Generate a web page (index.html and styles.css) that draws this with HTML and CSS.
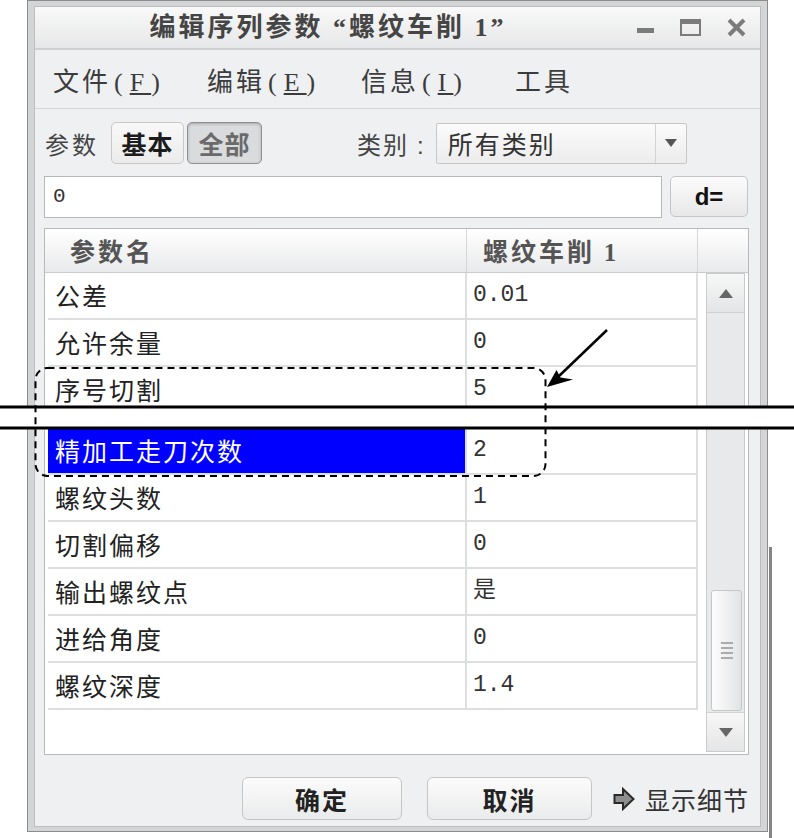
FILE: index.html
```html
<!DOCTYPE html>
<html lang="zh-CN">
<head>
    <meta charset="UTF-8">
    <title>编辑序列参数</title>
    <link rel="stylesheet" href="styles.css">
</head>
<body>
    <div class="window">
        <div class="frame">
            <div class="titlebar">
                <div class="title">编辑序列参数 “螺纹车削 1”</div>
                <div class="controls">
                    <svg class="ctl-min" width="17" height="5" viewBox="0 0 17 5"><rect width="17" height="5" fill="#7b7b7b"/></svg>
                    <svg width="21" height="17" viewBox="0 0 21 17"><rect x="1" y="1" width="19" height="15" fill="none" stroke="#7b7b7b" stroke-width="2"/><rect x="0" y="0" width="21" height="5" fill="#7b7b7b"/></svg>
                    <svg width="19" height="19" viewBox="0 0 19 19"><path d="M2 2 L17 17 M17 2 L2 17" stroke="#7b7b7b" stroke-width="4"/></svg>
                </div>
            </div>

            <div class="menubar">
                <span class="menu-item">文件<span class="key">(<u>F</u>)</span></span>
                <span class="menu-item">编辑<span class="key">(<u>E</u>)</span></span>
                <span class="menu-item">信息<span class="key">(<u>I</u>)</span></span>
                <span class="menu-item">工具</span>
            </div>

            <div class="toolbar">
                <span class="label">参数</span>
                <span class="seg">基本</span>
                <span class="seg pressed">全部</span>
                <span class="label cat">类别<span class="colon">:</span></span>
                <div class="select">
                    <span class="select-text">所有类别</span>
                    <span class="select-arrow">
                        <svg width="12" height="8" viewBox="0 0 12 8"><polygon points="0,0 12,0 6,8" fill="#555"/></svg>
                    </span>
                </div>
            </div>

            <div class="input-row">
                <div class="input">0</div>
                <div class="btn-d">d=</div>
            </div>

            <div class="table">
                <div class="thead">
                    <div class="th th-name">参数名</div>
                    <div class="th th-val">螺纹车削 <span class="num">1</span></div>
                    <div class="th th-rest"></div>
                </div>
                <div class="tbody">
                    <div class="rows">
                        <div class="row"><div class="cell name">公差</div><div class="cell val">0.01</div></div>
                        <div class="row"><div class="cell name">允许余量</div><div class="cell val">0</div></div>
                        <div class="row cut"><div class="cell name">序号切割</div><div class="cell val">5</div></div>
                        <div class="row sel"><div class="cell name">精加工走刀次数</div><div class="cell val">2</div></div>
                        <div class="row"><div class="cell name">螺纹头数</div><div class="cell val">1</div></div>
                        <div class="row"><div class="cell name">切割偏移</div><div class="cell val">0</div></div>
                        <div class="row"><div class="cell name">输出螺纹点</div><div class="cell val">是</div></div>
                        <div class="row"><div class="cell name">进给角度</div><div class="cell val">0</div></div>
                        <div class="row"><div class="cell name">螺纹深度</div><div class="cell val">1.4</div></div>
                    </div>
                    <div class="scroll-col">
                        <div class="scrollbar">
                            <div class="sb-btn sb-up">
                                <svg width="14" height="9" viewBox="0 0 14 9"><polygon points="0,9 14,9 7,0" fill="#666"/></svg>
                            </div>
                            <div class="sb-track">
                                <div class="sb-thumb">
                                    <div class="grip"><i></i><i></i><i></i><i></i></div>
                                </div>
                            </div>
                            <div class="sb-btn sb-down">
                                <svg width="14" height="9" viewBox="0 0 14 9"><polygon points="0,0 14,0 7,9" fill="#666"/></svg>
                            </div>
                        </div>
                    </div>
                </div>
            </div>

            <div class="footer">
                <div class="btn ok">确定</div>
                <div class="btn cancel">取消</div>
                <div class="details">
                    <svg width="22" height="24" viewBox="0 0 22 24"><polygon points="1.5,8 10,8 10,2 20.5,12 10,22 10,16 1.5,16" fill="#8e8e8e" stroke="#2a2a2a" stroke-width="2" stroke-linejoin="miter"/></svg>
                    <span class="details-text">显示细节</span>
                </div>
            </div>
        </div>
    </div>
    <div class="edge"></div>

    <!-- break marks and annotation drawn over the screenshot -->
    <svg class="notes" width="794" height="838" viewBox="0 0 794 838">
        <rect x="0" y="408" width="794" height="19" fill="#fff"/>
        <rect x="0" y="405.5" width="794" height="3" fill="#000"/>
        <rect x="0" y="426.5" width="794" height="3" fill="#000"/>
        <rect x="35.5" y="368" width="510" height="108" rx="12" fill="none" stroke="#000" stroke-width="2" stroke-dasharray="7 5"/>
        <line x1="607" y1="330" x2="558" y2="377" stroke="#000" stroke-width="2.5"/>
        <polygon points="547,387 556.5,370 560.4,377.6 573,379.5" fill="#000"/>
    </svg>
</body>
</html>
```

FILE: styles.css
```css
body {
    margin: 0;
    height: 838px;
    box-sizing: border-box;
    padding-left: 27px;
    display: flex;
    align-items: flex-start;
    position: relative;
    overflow: hidden;
    background: #fff;
    font-family: "Noto Sans CJK SC", sans-serif;
    color: #2a2a2a;
}

.window {
    width: 741px;
    box-sizing: border-box;
    border: 1px solid #8c8c8c;
    padding: 5px 6px 4px;
    background: #d4d5d6;
}

.frame {
    border: 1px solid #bdbdbd;
    background: #eef0f1;
}

/* title bar */
.titlebar {
    display: flex;
    height: 41px;
    border-bottom: 2px solid #cdcfd0;
    background: linear-gradient(#f9f9f9, #e6e7e8);
}

.title {
    flex: 1;
    text-align: center;
    font-family: "Liberation Serif", "Noto Sans CJK SC", serif;
    font-size: 26px;
    font-weight: 700;
    line-height: 41px;
    letter-spacing: 3px;
    color: #454545;
}

.controls {
    width: 139px;
    box-sizing: border-box;
    display: flex;
    align-items: center;
    gap: 26px;
    padding-left: 16px;
}

.ctl-min {
    margin-top: 6px;
}

/* menu */
.menubar {
    display: flex;
    align-items: center;
    height: 58px;
    padding-left: 18px;
    border-bottom: 1px solid #d3d5d6;
    font-family: "Liberation Serif", "Noto Sans CJK SC", serif;
    font-size: 26px;
    letter-spacing: 3px;
    color: #3c3c3c;
}

.menu-item {
    width: 154px;
    white-space: nowrap;
}

.key {
    letter-spacing: 7px;
    margin-left: 3px;
}

/* toolbar */
.toolbar {
    display: flex;
    align-items: center;
    height: 42px;
    padding: 13px 0 12px 10px;
}

.label {
    font-size: 24px;
    letter-spacing: 3px;
    color: #444;
}

.seg {
    height: 42px;
    box-sizing: border-box;
    display: flex;
    align-items: center;
    justify-content: center;
    border: 1px solid #c8c8c8;
    border-radius: 5px;
    background: linear-gradient(#f8f8f8, #ebebeb);
    font-size: 25px;
    font-weight: 700;
    letter-spacing: 1px;
    color: #1c1c1c;
    width: 73px;
    margin-left: 12px;
}

.seg.pressed {
    width: 75px;
    margin-left: 3px;
    border-color: #8f9091;
    background: #d9dbdc;
    box-shadow: inset 0 1px 3px rgba(0, 0, 0, 0.25);
    color: #6a6a6a;
}

.label.cat {
    margin-left: 95px;
    letter-spacing: 2px;
}

.colon {
    font-family: "Liberation Sans", sans-serif;
    margin-left: 8px;
}

.select {
    display: flex;
    width: 251px;
    height: 41px;
    box-sizing: border-box;
    margin-left: 10px;
    border: 1px solid #c5c7c8;
    border-radius: 2px;
    background: linear-gradient(#fbfbfb, #ececec);
}

.select-text {
    flex: 1;
    padding-left: 11px;
    font-size: 25px;
    line-height: 38px;
    letter-spacing: 2px;
    color: #333;
}

.select-arrow {
    width: 30px;
    border-left: 1px solid #d0d2d3;
    display: flex;
    align-items: center;
    justify-content: center;
}

/* input line */
.input-row {
    display: flex;
    margin: 0 0 10px 9px;
}

.input {
    width: 618px;
    height: 42px;
    box-sizing: border-box;
    border: 1px solid #b5b7b8;
    background: #fff;
    padding-left: 8px;
    font-family: "Liberation Mono", monospace;
    font-size: 21px;
    line-height: 40px;
    color: #333;
}

.btn-d {
    width: 78px;
    height: 41px;
    box-sizing: border-box;
    margin-left: 8px;
    border: 1px solid #c3c5c6;
    border-radius: 5px;
    background: linear-gradient(#fbfbfb, #e8e8e8);
    text-align: center;
    font-family: "Liberation Sans", sans-serif;
    font-weight: 700;
    font-size: 24px;
    line-height: 39px;
    color: #111;
}

/* table */
.table {
    width: 705px;
    box-sizing: border-box;
    margin-left: 9px;
    border: 1px solid #b7b9ba;
    background: #fff;
}

.thead {
    display: flex;
    height: 44px;
    box-sizing: border-box;
    border-bottom: 1px solid #c9cbcc;
    background: linear-gradient(#ffffff, #e9eaeb);
}

.th {
    box-sizing: border-box;
    font-size: 25px;
    font-weight: 700;
    line-height: 43px;
    letter-spacing: 3px;
    color: #555;
}

.th-name {
    width: 422px;
    padding-left: 25px;
    border-right: 1px solid #d4d6d7;
}

.th-val {
    width: 231px;
    padding-left: 16px;
    border-right: 1px solid #d4d6d7;
}

.th-rest {
    flex: 1;
}

.num {
    font-family: "Liberation Serif", serif;
}

.tbody {
    display: flex;
    height: 481px;
}

.rows {
    width: 653px;
    box-sizing: border-box;
    padding-left: 3px;
}

.row {
    display: flex;
    height: 47px;
    box-sizing: border-box;
    border-bottom: 2px solid #dcdedf;
}

.row.cut {
    height: 61px;
}

.cell {
    box-sizing: border-box;
    line-height: 45px;
    border-right: 2px solid #dcdedf;
}

.cell.name {
    width: 419px;
    padding-left: 7px;
    font-size: 25px;
    letter-spacing: 2px;
    color: #222;
}

.cell.val {
    width: 231px;
    padding-left: 6px;
    font-family: "Liberation Mono", "Noto Sans CJK SC", monospace;
    font-size: 23px;
    color: #333;
}

.row.sel .name {
    background: #0000ff;
    color: #fff;
}

/* scrollbar */
.scroll-col {
    flex: 1;
    padding: 0 3px 0 8px;
}

.scrollbar {
    height: 479px;
    box-sizing: border-box;
    display: flex;
    flex-direction: column;
    border: 1px solid #c9cbcc;
    background: #e8e9ea;
}

.sb-btn {
    height: 38px;
    display: flex;
    align-items: center;
    justify-content: center;
    background: linear-gradient(#f7f7f7, #e4e5e6);
}

.sb-up {
    border-bottom: 1px solid #cfd1d2;
}

.sb-down {
    border-top: 1px solid #cfd1d2;
}

.sb-track {
    flex: 1;
    display: flex;
    flex-direction: column;
    justify-content: flex-end;
}

.sb-thumb {
    height: 121px;
    box-sizing: border-box;
    margin: 0 2px 1px 4px;
    border: 1px solid #c5c7c8;
    border-radius: 3px;
    background: linear-gradient(90deg, #fdfdfd, #e2e3e4);
    display: flex;
    align-items: center;
    justify-content: center;
}

.grip {
    display: flex;
    flex-direction: column;
    gap: 3px;
}

.grip i {
    display: block;
    width: 12px;
    height: 2px;
    background: #a9abac;
}

/* footer buttons */
.footer {
    display: flex;
    align-items: center;
    height: 43px;
    padding: 22px 0 6px 207px;
}

.btn {
    height: 43px;
    box-sizing: border-box;
    display: flex;
    align-items: center;
    justify-content: center;
    border: 1px solid #c3c5c6;
    border-radius: 6px;
    background: linear-gradient(#fbfbfb, #eaebec);
    font-size: 25px;
    font-weight: 700;
    letter-spacing: 2px;
    color: #222;
}

.btn.ok {
    width: 160px;
}

.btn.cancel {
    width: 165px;
    margin-left: 25px;
}

.details {
    display: flex;
    align-items: center;
    margin-left: 21px;
}

.details-text {
    margin-left: 10px;
    font-size: 25px;
    letter-spacing: 1px;
    color: #333;
}

.edge {
    width: 3px;
    height: 291px;
    margin: 547px 0 0 1px;
    background: #858585;
}

.notes {
    position: absolute;
    left: 0;
    top: 0;
    pointer-events: none;
}
```
